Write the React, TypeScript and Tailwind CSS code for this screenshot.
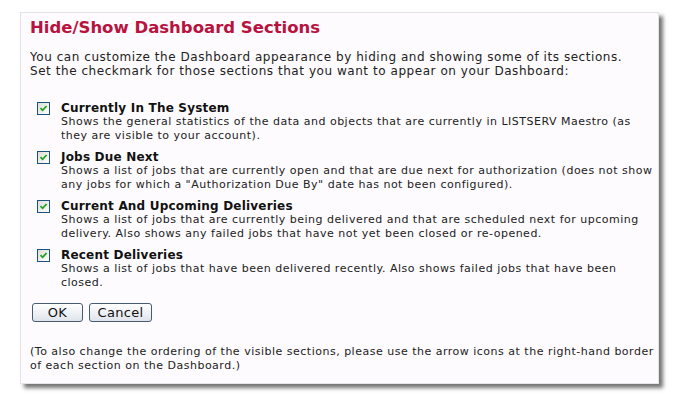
import React from "react";

const sections = [
  {
    name: "Currently In The System",
    lines: [
      "Shows the general statistics of the data and objects that are currently in LISTSERV Maestro (as",
      "they are visible to your account).",
    ],
  },
  {
    name: "Jobs Due Next",
    lines: [
      "Shows a list of jobs that are currently open and that are due next for authorization (does not show",
      'any jobs for which a "Authorization Due By" date has not been configured).',
    ],
  },
  {
    name: "Current And Upcoming Deliveries",
    lines: [
      "Shows a list of jobs that are currently being delivered and that are scheduled next for upcoming",
      "delivery. Also shows any failed jobs that have not yet been closed or re-opened.",
    ],
  },
  {
    name: "Recent Deliveries",
    lines: [
      "Shows a list of jobs that have been delivered recently. Also shows failed jobs that have been",
      "closed.",
    ],
  },
];

function CheckBox() {
  return (
    <span className="mt-[1px] flex h-[13px] w-[13px] shrink-0 items-center justify-center border border-[#1c5180] bg-gradient-to-br from-[#dcdcd7] to-[#ffffff]">
      <svg width="9" height="9" viewBox="0 0 9 9">
        <path d="M1.5 4.2 L3.6 6.3 L7.6 2" fill="none" stroke="#21a121" strokeWidth="1.8" />
      </svg>
    </span>
  );
}

function Btn({ label, w }: { label: string; w: string }) {
  return (
    <button
      type="button"
      className={`${w} h-[19px] rounded-[3px] border border-[#4a5a70] bg-gradient-to-b from-[#ffffff] to-[#dfe4ec] text-[13px] leading-none tracking-[0.3px] text-[#111]`}
    >
      {label}
    </button>
  );
}

export default function App() {
  return (
    <div className="h-[404px] w-[679px] bg-white pl-[20px] pt-[12px] font-['DejaVu_Sans',Verdana,sans-serif] text-[11px] leading-[14px] tracking-[0.5px] text-[#222]">
      <div className="flex h-[372px] w-[639px] flex-col border border-[#e4e4e8] bg-[#fdfbfd] pl-[9px] pr-[6px] pt-[4px] shadow-[4px_4px_4px_rgba(0,0,0,0.55)]">
        <h1 className="text-[16.5px] font-bold leading-[22px] tracking-normal text-[#b8123f]">Hide/Show Dashboard Sections</h1>
        <p className="mt-[11px] whitespace-nowrap text-[12px] tracking-[0.55px]">
          You can customize the Dashboard appearance by hiding and showing some of its sections.
          <br />
          Set the checkmark for those sections that you want to appear on your Dashboard:
        </p>
        <div className="mt-[23px] flex flex-col gap-[7px] pl-[7px]">
          {sections.map((s) => (
            <div key={s.name} className="flex gap-[11px]">
              <CheckBox />
              <div className="whitespace-nowrap">
                <div className="text-[12px] font-bold leading-[14px] tracking-[0.2px] text-[#111]">{s.name}</div>
                {s.lines.map((l) => (
                  <div key={l}>{l}</div>
                ))}
              </div>
            </div>
          ))}
        </div>
        <div className="mt-[13px] flex gap-[6px] pl-[2px]">
          <Btn label="OK" w="w-[51px]" />
          <Btn label="Cancel" w="w-[63px]" />
        </div>
        <p className="mt-[23px] whitespace-nowrap">
          (To also change the ordering of the visible sections, please use the arrow icons at the right-hand border
          <br />
          of each section on the Dashboard.)
        </p>
      </div>
    </div>
  );
}
